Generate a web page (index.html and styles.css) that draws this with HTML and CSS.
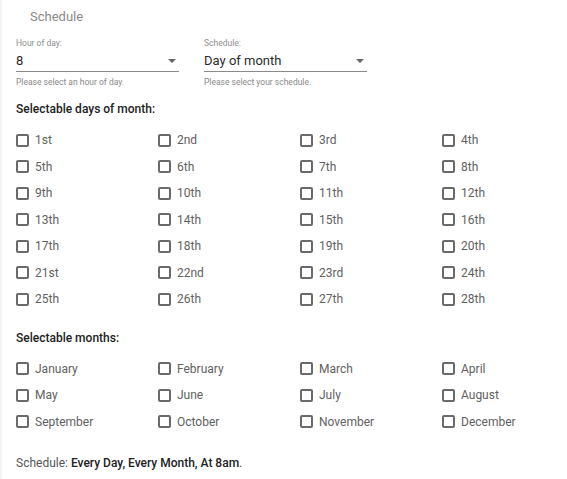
FILE: index.html
```html
<!DOCTYPE html>
<html>
<head>
<meta charset="utf-8">
<link rel="stylesheet" href="styles.css">
</head>
<body>
<div class="card">
  <div class="title">Schedule</div>
  <div class="selects">
    <div class="field">
      <div class="label">Hour of day:</div>
      <div class="control"><span>8</span><span class="arrow"></span></div>
      <div class="helper">Please select an hour of day.</div>
    </div>
    <div class="field">
      <div class="label">Schedule:</div>
      <div class="control"><span>Day of month</span><span class="arrow"></span></div>
      <div class="helper">Please select your schedule.</div>
    </div>
  </div>
  <div class="heading h-days">Selectable days of month:</div>
  <div class="grid">
    <label class="cb"><span class="box"></span>1st</label>
    <label class="cb"><span class="box"></span>2nd</label>
    <label class="cb"><span class="box"></span>3rd</label>
    <label class="cb"><span class="box"></span>4th</label>
    <label class="cb"><span class="box"></span>5th</label>
    <label class="cb"><span class="box"></span>6th</label>
    <label class="cb"><span class="box"></span>7th</label>
    <label class="cb"><span class="box"></span>8th</label>
    <label class="cb"><span class="box"></span>9th</label>
    <label class="cb"><span class="box"></span>10th</label>
    <label class="cb"><span class="box"></span>11th</label>
    <label class="cb"><span class="box"></span>12th</label>
    <label class="cb"><span class="box"></span>13th</label>
    <label class="cb"><span class="box"></span>14th</label>
    <label class="cb"><span class="box"></span>15th</label>
    <label class="cb"><span class="box"></span>16th</label>
    <label class="cb"><span class="box"></span>17th</label>
    <label class="cb"><span class="box"></span>18th</label>
    <label class="cb"><span class="box"></span>19th</label>
    <label class="cb"><span class="box"></span>20th</label>
    <label class="cb"><span class="box"></span>21st</label>
    <label class="cb"><span class="box"></span>22nd</label>
    <label class="cb"><span class="box"></span>23rd</label>
    <label class="cb"><span class="box"></span>24th</label>
    <label class="cb"><span class="box"></span>25th</label>
    <label class="cb"><span class="box"></span>26th</label>
    <label class="cb"><span class="box"></span>27th</label>
    <label class="cb"><span class="box"></span>28th</label>
  </div>
  <div class="heading h-months">Selectable months:</div>
  <div class="grid">
    <label class="cb"><span class="box"></span>January</label>
    <label class="cb"><span class="box"></span>February</label>
    <label class="cb"><span class="box"></span>March</label>
    <label class="cb"><span class="box"></span>April</label>
    <label class="cb"><span class="box"></span>May</label>
    <label class="cb"><span class="box"></span>June</label>
    <label class="cb"><span class="box"></span>July</label>
    <label class="cb"><span class="box"></span>August</label>
    <label class="cb"><span class="box"></span>September</label>
    <label class="cb"><span class="box"></span>October</label>
    <label class="cb"><span class="box"></span>November</label>
    <label class="cb"><span class="box"></span>December</label>
  </div>
  <div class="summary">Schedule: <b>Every Day, Every Month, At 8am</b>.</div>
</div>
</body>
</html>
```
FILE: styles.css
```css
html, body {
  margin: 0;
  padding: 0;
}
body {
  background: #f3f3f3;
  font-family: Roboto, "Liberation Sans", sans-serif;
  padding-left: 2px;
}
.card {
  background: #fff;
  min-height: 479px;
  padding-left: 14px;
  box-sizing: border-box;
}
.title {
  padding-top: 9px;
  padding-left: 14px;
  font-size: 13px;
  line-height: 16px;
  color: #8a8a8a;
}
.selects {
  display: flex;
  gap: 25px;
  margin-top: 13px;
}
.field {
  width: 163px;
}
.label {
  font-size: 8.5px;
  line-height: 11px;
  color: #8e8e8e;
}
.control {
  display: flex;
  justify-content: space-between;
  align-items: center;
  font-size: 13px;
  line-height: 16px;
  color: #2a2a2a;
  padding-top: 4px;
  padding-bottom: 2px;
  border-bottom: 1px solid #8a8a8a;
}
.arrow {
  width: 0;
  height: 0;
  border-left: 4px solid transparent;
  border-right: 4px solid transparent;
  border-top: 4px solid #666;
  margin-right: 3px;
}
.helper {
  margin-top: 5px;
  font-size: 8.5px;
  line-height: 11px;
  color: #8a8a8a;
}
.heading {
  font-size: 12px;
  line-height: 16px;
  font-weight: 500;
  color: #222;
}
.h-days {
  margin-top: 13px;
}
.h-months {
  margin-top: 17px;
}
.grid {
  display: grid;
  grid-template-columns: repeat(4, 142px);
  grid-auto-rows: 26.5px;
  margin-top: 10px;
}
.cb {
  display: flex;
  align-items: center;
  font-size: 12px;
  color: #616161;
}
.box {
  width: 9px;
  height: 9px;
  border: 2px solid #6a6a6a;
  border-radius: 2px;
  margin-right: 6px;
  flex: none;
}
.summary {
  margin-top: 20px;
  font-size: 12px;
  line-height: 16px;
  color: #555;
}
.summary b {
  font-weight: 500;
  color: #222;
}
```
